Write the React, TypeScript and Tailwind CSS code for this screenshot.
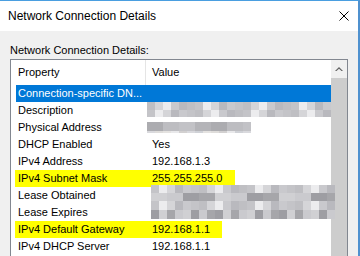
import React from "react";

const PALETTE = ["#d9d9dd", "#c9c9cd", "#e4e2e0", "#bfbfc3", "#d2d0d0", "#ececee", "#cfd1d6", "#b9b9be", "#dedcda", "#c4c4c8", "#e8e8ea", "#d5d5d8"];
const DARK = ["#b4b4b8", "#a6a6aa", "#c2c2c6", "#9e9ea3", "#bdbdc1", "#cacace", "#acacb0", "#d0d0d3"];

function Mosaic({ left, top, cols, cellW, rows, dark, seed }: { left: number; top: number; cols: number; cellW: number; rows: number[]; dark?: number[]; seed: number }) {
  return (
    <div className="absolute flex flex-col" style={{ left, top }}>
      {rows.map((h, r) => (
        <div key={r} className="flex">
          {Array.from({ length: cols }).map((_, c) => {
            const pal = dark && dark.includes(r) ? DARK : PALETTE;
            const color = pal[(c * 7 + r * 5 + seed * 3 + ((c * c + r) % 4)) % pal.length];
            return <div key={c} style={{ width: cellW, height: h, backgroundColor: color }} />;
          })}
        </div>
      ))}
    </div>
  );
}

type Row = { label: string; value?: string; selected?: boolean; yellow?: number };

const ROWS: Row[] = [
  { label: "Connection-specific DN...", selected: true },
  { label: "Description" },
  { label: "Physical Address" },
  { label: "DHCP Enabled", value: "Yes" },
  { label: "IPv4 Address", value: "192.168.1.3" },
  { label: "IPv4 Subnet Mask", value: "255.255.255.0", yellow: 220 },
  { label: "Lease Obtained" },
  { label: "Lease Expires" },
  { label: "IPv4 Default Gateway", value: "192.168.1.1", yellow: 207 },
  { label: "IPv4 DHCP Server", value: "192.168.1.1" },
];

function ListRow({ row }: { row: Row }) {
  if (row.selected) {
    return (
      <div className="flex h-[17px] items-center bg-[#0078d7] text-white">
        <div className="w-[130px] pl-[2px] whitespace-nowrap overflow-hidden">{row.label}</div>
      </div>
    );
  }
  if (row.yellow) {
    return (
      <div className="flex h-[17px]">
        <div className="-ml-px flex h-[17px] items-center bg-[#ffff00] pl-px" style={{ width: row.yellow }}>
          <div className="w-[130px] pl-[2px] whitespace-nowrap">{row.label}</div>
          <div className="pl-[6px] whitespace-nowrap">{row.value}</div>
        </div>
      </div>
    );
  }
  return (
    <div className="flex h-[17px] items-center">
      <div className="w-[130px] pl-[2px] whitespace-nowrap">{row.label}</div>
      <div className="pl-[6px] whitespace-nowrap">{row.value}</div>
    </div>
  );
}

export default function App() {
  return (
    <div
      className="w-[360px] h-[256px] overflow-hidden border-t border-t-[#4a9ee0] border-r-2 border-r-[#4f91cf] bg-[#f0f0f0] text-black flex flex-col"
      style={{ fontFamily: '"Liberation Sans", Arial, sans-serif' }}
    >
      {/* title bar */}
      <div className="h-[30px] shrink-0 bg-white flex items-center justify-between pl-[8px] pr-[9px]">
        <span className="text-[12px] leading-none">Network Connection Details</span>
        <svg width="10" height="10" viewBox="0 0 10 10" className="shrink-0">
          <path d="M0.5 0.5 L9.5 9.5 M9.5 0.5 L0.5 9.5" stroke="#000" strokeWidth="1" />
        </svg>
      </div>
      {/* body */}
      <div className="flex-1 flex flex-col pl-[10px] pr-[10px] pt-[11px]">
        <div className="text-[11px] leading-[16px] h-[16px]">Network Connection Details:</div>
        <div className="mt-[1px] flex-1 border border-[#828790] border-b-0 bg-white flex text-[11px]">
          <div className="relative flex-1 pl-[5px] flex flex-col">
            <div className="flex h-[25px] shrink-0 items-center">
              <div className="w-[129px] pl-[2px] h-full flex items-center">Property</div>
              <div className="w-px h-full bg-[#e5e5e5]" />
              <div className="pl-[6px]">Value</div>
            </div>
            {ROWS.map((r, i) => (
              <ListRow key={i} row={r} />
            ))}
            <Mosaic left={136} top={42} cols={23} cellW={8} rows={[8, 7]} seed={1} />
            <Mosaic left={136} top={62} cols={13} cellW={8} rows={[9, 2]} dark={[0]} seed={2} />
            <Mosaic left={140} top={125} cols={23} cellW={8} rows={[8, 8, 9, 9]} dark={[1, 3]} seed={3} />
          </div>
          {/* scrollbar */}
          <div className="w-[16px] shrink-0 flex flex-col bg-[#f0f0f0]">
            <div className="h-[18px] flex items-center justify-center">
              <svg width="8" height="6" viewBox="0 0 8 6">
                <path d="M0 5 L4 1 L8 5 L6.5 5 L4 2.8 L1.5 5 Z" fill="#606060" />
              </svg>
            </div>
            <div className="flex-1 bg-[#cdcdcd]" />
          </div>
        </div>
      </div>
    </div>
  );
}
